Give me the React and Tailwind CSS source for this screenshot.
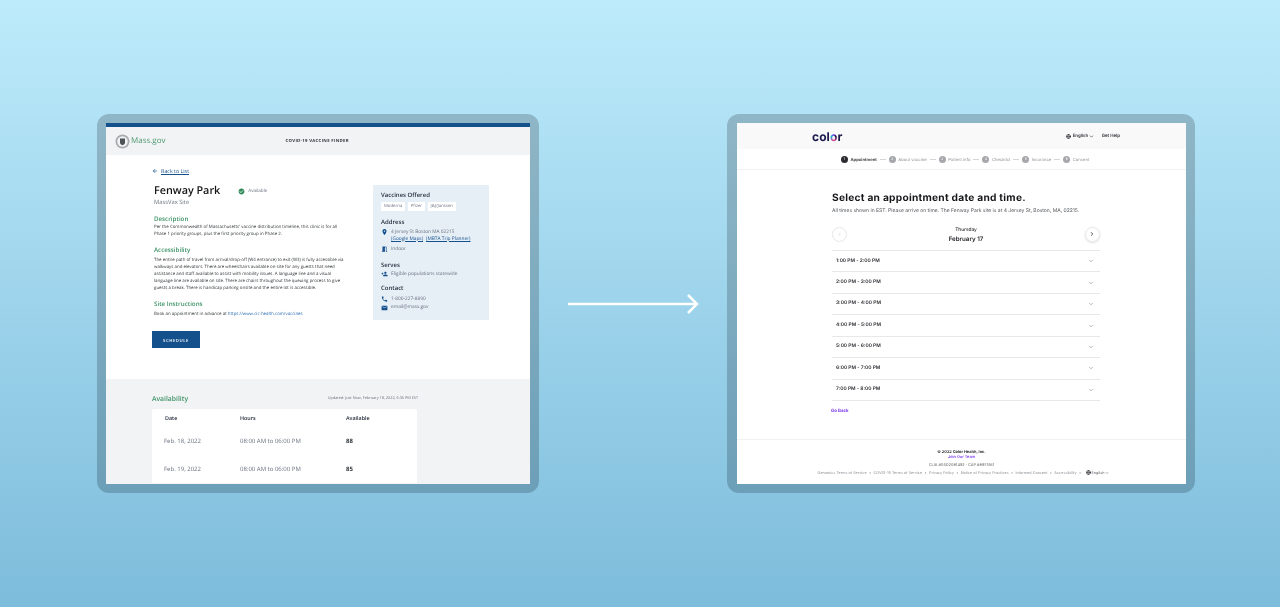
import React from 'react';
import { ArrowLeft, ChevronDown, ChevronLeft, ChevronRight, Globe } from 'lucide-react';
import { MdCheckCircle, MdEmail, MdLocationOn, MdMeetingRoom, MdPhone, MdPersonAdd } from 'react-icons/md';

const OPEN = "font-['Open_Sans','Noto_Sans',sans-serif]";
const GOTHAM = "font-['Inter','Liberation_Sans',sans-serif]";

const slots = [
  '1:00 PM - 2:00 PM',
  '2:00 PM - 3:00 PM',
  '3:00 PM - 4:00 PM',
  '4:00 PM - 5:00 PM',
  '5:00 PM - 6:00 PM',
  '6:00 PM - 7:00 PM',
  '7:00 PM - 8:00 PM',
];

const steps = ['Appointment', 'About vaccine', 'Patient info', 'Checklist', 'Insurance', 'Consent'];

const footerLinks = [
  'Genomics Terms of Service',
  'COVID-19 Terms of Service',
  'Privacy Policy',
  'Notice of Privacy Practices',
  'Informed Consent',
  'Accessibility',
];

function Heading({ children, className = '' }) {
  return <h3 className={`text-[6.2px] leading-[8px] font-semibold text-[#3f9468] ${className}`}>{children}</h3>;
}

function PanelTitle({ children, className = '' }) {
  return <h4 className={`text-[6px] leading-[8px] font-semibold text-[#1f2937] ${className}`}>{children}</h4>;
}

function PanelRow({ icon, children, className = '' }) {
  return (
    <div className={`flex items-start gap-[3px] text-[4.8px] leading-[7px] text-[#6b7280] ${className}`}>
      <span className="w-[7px] h-[7px] flex items-center justify-center text-[#14508c] text-[8px] shrink-0">{icon}</span>
      <div>{children}</div>
    </div>
  );
}

function MassScreen() {
  return (
    <div className={`w-[424px] h-[361px] overflow-hidden bg-white flex flex-col blur-[0.3px] ${OPEN}`}>
      <div className="h-[4px] bg-[#14508c] shrink-0" />
      <header className="h-[28px] shrink-0 bg-[#f2f3f4] flex items-center pl-[9px]">
        <svg width="15" height="15" viewBox="0 0 15 15" className="shrink-0">
          <circle cx="7.5" cy="7.5" r="7" fill="#a9acaf" />
          <circle cx="7.5" cy="7.5" r="5.2" fill="#f2f3f4" />
          <path d="M5 4.5h5v4.2c0 1.3-1.2 2-2.5 2.6C6.2 10.7 5 10 5 8.7z" fill="#4d5256" />
        </svg>
        <span className="ml-[1px] text-[8px] leading-none text-[#4f9a73]">Mass.gov</span>
        <span className="ml-[120px] text-[4.3px] font-bold tracking-[0.3px] text-[#33383c]">COVID-19 VACCINE FINDER</span>
      </header>

      <main className="h-[224px] shrink-0 pl-[46px] flex">
        <div className="w-[196px] shrink-0 pt-[12px]">
          <a className="flex items-center gap-[3px] text-[5.3px] leading-[8px] text-[#14508c]">
            <ArrowLeft size={6} strokeWidth={2.5} />
            <span className="underline">Back to List</span>
          </a>
          <div className="mt-[9px] ml-[2px] flex items-center">
            <h1 className="text-[10.8px] leading-[14px] font-semibold text-[#141414]">Fenway Park</h1>
            <span className="ml-[18px] flex items-center gap-[3px] text-[4.6px] text-[#6b7280]">
              <MdCheckCircle size={7} className="text-[#2f8a57]" />
              Available
            </span>
          </div>
          <p className="ml-[2px] text-[5.8px] leading-[8px] text-[#6b7280]">MassVax Site</p>

          <div className="ml-[2px] w-[193px]">
            <Heading className="mt-[9px]">Description</Heading>
            <p className="mt-[0.5px] text-[4.4px] leading-[7.2px] text-[#33383c]">
              Per the Commonwealth of Massachusetts' vaccine distribution timeline, this clinic is for all
              Phase 1 priority groups, plus the first priority group in Phase 2.
            </p>
            <Heading className="mt-[8px]">Accessibility</Heading>
            <p className="mt-[3px] text-[4.4px] leading-[7.1px] text-[#33383c]">
              The entire path of travel from arrival/drop-off (W4 entrance) to exit (W3) is fully accessible via
              walkways and elevators. There are wheelchairs available on-site for any guests that need
              assistance and staff available to assist with mobility issues. A language line and a visual
              language line are available on site. There are chairs throughout the queuing process to give
              guests a break. There is handicap parking onsite and the entire lot is accessible.
            </p>
            <Heading className="mt-[8px]">Site Instructions</Heading>
            <p className="mt-[3px] text-[4.4px] leading-[7.1px] text-[#33383c]">
              Book an appointment in advance at <a className="text-[#2b6cb0]">https://www.cic-health.com/vaccines</a>
            </p>
          </div>
          <button className="mt-[13px] w-[48px] h-[17px] bg-[#14508c] text-white text-[4.3px] font-semibold tracking-[0.5px]">
            SCHEDULE
          </button>
        </div>

        <aside className="ml-[25px] mt-[30px] w-[116px] h-[135px] bg-[#e6eef6] pt-[6px] pl-[8px]">
          <PanelTitle>Vaccines Offered</PanelTitle>
          <div className="mt-[3px] flex gap-[2.5px] text-[4.3px] text-[#6b7280]">
            <span className="h-[8.5px] px-[3px] flex items-center bg-white rounded-[1px]">Moderna</span>
            <span className="h-[8.5px] px-[3px] flex items-center bg-white rounded-[1px]">Pfizer</span>
            <span className="h-[8.5px] px-[3px] flex items-center bg-white rounded-[1px]">J&amp;J/Janssen</span>
          </div>
          <PanelTitle className="mt-[7px]">Address</PanelTitle>
          <PanelRow icon={<MdLocationOn />} className="mt-[3px]">
            <div>4 Jersey St Boston MA 02215</div>
            <div className="text-[#14508c]">
              <span className="underline">(Google Maps)</span>
              <span className="ml-[3px] underline">(MBTA Trip Planner)</span>
            </div>
          </PanelRow>
          <PanelRow icon={<MdMeetingRoom />} className="mt-[3px]">Indoor</PanelRow>
          <PanelTitle className="mt-[8px]">Serves</PanelTitle>
          <PanelRow icon={<MdPersonAdd />} className="mt-[2px]">Eligible populations statewide</PanelRow>
          <PanelTitle className="mt-[6px]">Contact</PanelTitle>
          <PanelRow icon={<MdPhone />} className="mt-[4px]">1-800-227-8890</PanelRow>
          <PanelRow icon={<MdEmail />} className="mt-[1.5px]">email@mass.gov</PanelRow>
        </aside>
      </main>

      <section className="flex-1 bg-[#f2f3f4] pl-[46px] pt-[16px]">
        <div className="w-[266px]">
          <div className="flex items-center justify-between h-[8px]">
            <h2 className="text-[6.8px] font-semibold text-[#3f9468]">Availability</h2>
            <span className="text-[3.8px] text-[#6b7280]">Updated: Just Now, February 18, 2022, 6:35 PM EST</span>
          </div>
          <div className="mt-[6px] w-[265px] bg-white rounded-t-[2px] text-[6px]">
            <div className="h-[18px] flex items-center font-semibold text-[#1f2937] text-[5.4px]">
              <span className="ml-[13px] w-[75px]">Date</span>
              <span className="w-[106px]">Hours</span>
              <span>Available</span>
            </div>
            <div className="h-[28px] mt-[0.5px] flex items-center text-[#6b7280]">
              <span className="ml-[12px] w-[76px]">Feb. 18, 2022</span>
              <span className="w-[106px]">08:00 AM to 06:00 PM</span>
              <span className="font-bold text-[#33383c]">88</span>
            </div>
            <div className="h-[27px] flex items-center text-[#6b7280]">
              <span className="ml-[12px] w-[76px]">Feb. 19, 2022</span>
              <span className="w-[106px]">08:00 AM to 06:00 PM</span>
              <span className="font-bold text-[#33383c]">85</span>
            </div>
          </div>
        </div>
      </section>
    </div>
  );
}

function ColorScreen() {
  return (
    <div className={`w-[449px] h-[361px] overflow-hidden bg-white flex flex-col blur-[0.3px] ${GOTHAM}`}>
      <header className="h-[26px] shrink-0 bg-[#f9f9fa] flex items-center pl-[75px] pr-[66px] pt-[2px]">
        <span className="text-[12px] leading-none font-bold tracking-[0.1px] text-[#1c1a4b]">
          col
          <span className="bg-[conic-gradient(#7c3aed,#1c1a4b,#ec4899,#06b6d4,#7c3aed)] bg-clip-text text-transparent">o</span>
          r
        </span>
        <div className="ml-auto flex items-center text-[4.4px] font-semibold text-[#33363b]">
          <Globe size={5} strokeWidth={3} className="text-[#33363b]" />
          <span className="ml-[1.5px]">English</span>
          <ChevronDown size={5} strokeWidth={3} className="ml-[0.5px] shrink-0" />
          <span className="ml-[8px]">Get Help</span>
        </div>
      </header>

      <nav className="h-[21px] shrink-0 border-b border-[#f0f1f3] flex items-center pl-[104px] pt-[1px] text-[4.2px] text-[#8d9196]">
        {steps.map((step, i) => (
          <React.Fragment key={step}>
            {i > 0 && <span className="w-[6px] h-[0.5px] bg-[#d4d6d9] mx-[3px]" />}
            <span className={`w-[7px] h-[7px] rounded-full flex items-center justify-center text-[3.5px] text-white ${i === 0 ? 'bg-[#2b2b30]' : 'bg-[#a5a7aa]'}`}>
              {i + 1}
            </span>
            <span className={`ml-[2.5px] mt-[2px] leading-[7px] ${i === 0 ? 'font-semibold text-[#33363b]' : ''}`}>{step}</span>
          </React.Fragment>
        ))}
      </nav>

      <main className="h-[270px] shrink-0 pl-[95px] border-b border-[#f0f1f3]">
        <h1 className="mt-[21px] text-[10.2px] leading-[14px] font-bold tracking-[0.25px] text-[#16171a]">
          Select an appointment date and time.
        </h1>
        <p className="mt-[3px] text-[5px] leading-[7px] text-[#55585d]">
          All times shown in EST. Please arrive on time. The Fenway Park site is at 4 Jersey St, Boston, MA, 02215.
        </p>
        <div className="mt-[5px] mb-[2px] w-[268px] h-[28px] flex items-center justify-between">
          <span className="w-[15px] h-[15px] rounded-full border border-[#e5e7ea] flex items-center justify-center text-[#b5b8bc]">
            <ChevronLeft size={5} />
          </span>
          <div className="pt-[3px] text-center text-[#26282c]">
            <div className="text-[4.8px] leading-[7px] font-medium">Thursday</div>
            <div className="mt-[2px] text-[6.2px] leading-[8px] font-semibold">February 17</div>
          </div>
          <span className="w-[15px] h-[15px] rounded-full border border-[#e5e7ea] shadow-sm flex items-center justify-center text-[#26282c]">
            <ChevronRight size={6} strokeWidth={3} />
          </span>
        </div>
        <ul className="w-[268px] border-t border-[#e6e8ea]">
          {slots.map((slot) => (
            <li key={slot} className="h-[21.45px] border-b border-[#e6e8ea] flex items-center justify-between pl-[4px] pr-[6px] text-[4.9px] font-semibold text-[#2b2d31]">
              {slot}
              <ChevronDown size={6} className="text-[#6b7075]" />
            </li>
          ))}
        </ul>
        <a className="block mt-[7px] -ml-px text-[4.4px] leading-[7px] font-bold text-[#7c3aed]">Go Back</a>
      </main>

      <footer className="flex-1 pt-[9px] text-center">
        <div className="text-[3.9px] leading-[5px] font-bold text-[#1f2124]">© 2022 Color Health, Inc.</div>
        <div className="text-[3.9px] leading-[5px] font-semibold text-[#7c3aed]">Join Our Team</div>
        <div className="mt-[3px] text-[3.9px] leading-[5px] text-[#55585d]">CLIA #05D2081492 · CAP #8975161</div>
        <div className="mt-[3px] pl-[4px] flex items-center justify-center gap-[2.4px] text-[3.75px] leading-[5px] text-[#8d9196]">
          {footerLinks.map((link) => (
            <React.Fragment key={link}>
              <span>{link}</span>
              <span>•</span>
            </React.Fragment>
          ))}
          <span className="ml-[2px] flex items-center gap-[1px] text-[#55585d]">
            <Globe size={5} strokeWidth={3} className="text-[#33363b] shrink-0" />
            English
            <ChevronDown size={4} strokeWidth={3} className="shrink-0" />
          </span>
        </div>
      </footer>
    </div>
  );
}

export default function App() {
  return (
    <div className="h-[607px] overflow-hidden bg-gradient-to-b from-[#bdebfb] to-[#7dbcdb] pt-[114px] pl-[97px] [text-rendering:geometricPrecision]">
      <div className="flex items-center">
        <div className="w-[442px] h-[379px] rounded-[12px] bg-gradient-to-b from-[#8fb6c6] to-[#6c9fb8] flex items-center justify-center">
          <MassScreen />
        </div>
        <div className="w-[188px] flex justify-center">
          <svg width="134" height="22" viewBox="0 0 134 22" fill="none" stroke="white" strokeWidth="2.5" className="ml-[-1px]">
            <path d="M2 11H131" />
            <path d="M122 2l9 9-9 9" />
          </svg>
        </div>
        <div className="w-[468px] h-[379px] rounded-[12px] bg-gradient-to-b from-[#8fb6c6] to-[#6c9fb8] flex items-center pl-[10px]">
          <ColorScreen />
        </div>
      </div>
    </div>
  );
}
